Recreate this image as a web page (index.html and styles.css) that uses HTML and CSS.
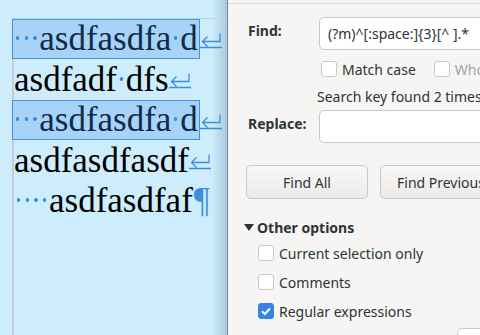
FILE: index.html
```html
<!DOCTYPE html>
<html lang="en">
<head>
  <meta charset="UTF-8" />
  <title>Find &amp; Replace</title>
  <link rel="stylesheet" href="styles.css">
</head>
<body>
  <div class="editor">
    <div class="page">
      <div class="line"><span class="sel"><span class="sp"></span><span class="sp"></span><span class="sp"></span>asdfasdfa<span class="sp"></span>d</span><svg class="ret" width="22" height="17" viewBox="0 0 22 17"><path d="M20 1.5v8H3M7.5 4.5l-5 5 5 5M0 15.5h22" fill="none" stroke="#3a8ee0" stroke-width="1.3"/></svg></div>
      <div class="line">asdfadf<span class="sp"></span>dfs<svg class="ret" width="22" height="17" viewBox="0 0 22 17"><path d="M20 1.5v8H3M7.5 4.5l-5 5 5 5M0 15.5h22" fill="none" stroke="#3a8ee0" stroke-width="1.3"/></svg></div>
      <div class="line"><span class="sel"><span class="sp"></span><span class="sp"></span><span class="sp"></span>asdfasdfa<span class="sp"></span>d</span><svg class="ret" width="22" height="17" viewBox="0 0 22 17"><path d="M20 1.5v8H3M7.5 4.5l-5 5 5 5M0 15.5h22" fill="none" stroke="#3a8ee0" stroke-width="1.3"/></svg></div>
      <div class="line">asdfasdfasdf<svg class="ret" width="22" height="17" viewBox="0 0 22 17"><path d="M20 1.5v8H3M7.5 4.5l-5 5 5 5M0 15.5h22" fill="none" stroke="#3a8ee0" stroke-width="1.3"/></svg></div>
      <div class="line"><span class="sp"></span><span class="sp"></span><span class="sp"></span><span class="sp"></span>asdfasdfaf<span class="pilcrow">¶</span></div>
    </div>
  </div>

  <div class="dialog">
    <div class="row">
      <label class="label">Find:</label>
      <div class="entry">(?m)^[:space:]{3}[^ ].*</div>
    </div>
    <div class="checks">
      <span class="check"><span class="box"></span>Match case</span>
      <span class="check off"><span class="box"></span>Whole words only</span>
    </div>
    <div class="status">Search key found 2 times</div>
    <div class="row">
      <label class="label">Replace:</label>
      <div class="entry"></div>
    </div>
    <div class="buttons">
      <button class="btn first">Find All</button>
      <button class="btn">Find Previous</button>
    </div>
    <div class="expander"><span class="arrow"></span>Other options</div>
    <div class="options">
      <span class="check"><span class="box"></span>Current selection only</span>
      <span class="check"><span class="box"></span>Comments</span>
      <span class="check"><span class="box on"><svg width="12" height="12" viewBox="0 0 12 12"><path d="M2 6.2l2.8 2.8L10 3.3" fill="none" stroke="#fff" stroke-width="2"/></svg></span>Regular expressions</span>
    </div>
    <div class="corner"></div>
  </div>
</body>
</html>
```

FILE: styles.css
```css
html, body {
  margin: 0;
  padding: 0;
  height: 100%;
  overflow: hidden;
}
body {
  display: flex;
  width: 480px;
  height: 335px;
  font-family: 'Noto Sans', sans-serif;
  background: #f6f5f4;
}
.editor {
  width: 228px;
  flex-shrink: 0;
  background: linear-gradient(to right, #cdedfd 0, #cdedfd 212px, #a9cadb 227px);
  border-right: 1px solid #6e8a99;
  padding: 19px 0 0 13px;
  box-sizing: border-box;
}
.page {
  height: 100%;
  border-top: 1px solid #bfd3dc;
  border-left: 2px solid #c4cdd2;
  margin-top: -1px;
  margin-left: -1px;
  font-family: 'Liberation Serif', serif;
  font-size: 35px;
  color: #000;
}
.line {
  height: 40.6px;
  line-height: 40px;
  white-space: nowrap;
}
.sel {
  display: inline-block;
  vertical-align: top;
  background: #a7d3f6;
  border: 1px solid #4690dc;
  color: #102b4a;
  margin-left: -2px;
  height: 38px;
  line-height: 38px;
  padding-right: 1px;
}
.sp {
  display: inline-block;
  width: 0.25em;
  height: 24px;
  vertical-align: baseline;
  background: radial-gradient(circle at 50% 50%, #3a8ee0 1.6px, transparent 2.1px);
}
.pilcrow {
  color: #3a8ee0;
  margin-left: 1px;
}
.ret {
  vertical-align: 1.5px;
}
.dialog {
  flex: 1;
  background: #f6f5f4;
  border-top: 1px solid #dcd8d4;
  margin-top: 3px;
  position: relative;
  overflow: hidden;
  color: #2e3436;
  font-size: 14px;
  padding: 13px 0 0 18px;
}
.row {
  display: flex;
  align-items: center;
  height: 33px;
}
.label {
  width: 71px;
  font-weight: bold;
  padding-left: 2px;
  margin-top: -7px;
}
.entry {
  flex: 1;
  height: 31px;
  margin-right: -20px;
  background: #fff;
  border: 1px solid #cdc7c2;
  border-radius: 5px;
  line-height: 31px;
  padding-left: 8px;
  white-space: nowrap;
}
.checks {
  display: flex;
  gap: 18px;
  margin: 11px 0 0 75px;
  white-space: nowrap;
}
.check {
  display: flex;
  align-items: center;
  gap: 5px;
  height: 16px;
  white-space: nowrap;
}
.check.off {
  color: #a0a5a6;
}
.box {
  width: 14px;
  height: 14px;
  border: 1px solid #cdc7c2;
  border-radius: 3px;
  background: #fff;
  display: flex;
  align-items: center;
  justify-content: center;
}
.box.on {
  background: #3584e4;
  border-color: #3584e4;
}
.status {
  margin: 9px 0 2px 71px;
  height: 22px;
  line-height: 22px;
  white-space: nowrap;
}
.buttons {
  display: flex;
  gap: 12px;
  margin-top: 22px;
  margin-right: -20px;
}
.btn {
  height: 34px;
  background: linear-gradient(#f8f7f6, #edebe9);
  border: 1px solid #cdc7c2;
  border-radius: 5px;
  font-family: 'Noto Sans', sans-serif;
  font-size: 14px;
  color: #2e3436;
  padding: 0;
  white-space: nowrap;
}
.btn.first {
  width: 122px;
}
.btn:not(.first) {
  flex: 1;
  text-align: left;
  padding-left: 16px;
}
.expander {
  display: flex;
  align-items: center;
  margin-top: 17px;
  font-weight: bold;
  height: 22px;
  margin-left: -2px;
}
.arrow {
  width: 0;
  height: 0;
  border-left: 5.5px solid transparent;
  border-right: 5.5px solid transparent;
  border-top: 7px solid #2e3436;
  margin: 1px 3px 0 0;
}
.options {
  display: flex;
  flex-direction: column;
  gap: 13px;
  margin: 7px 0 0 12px;
}
.corner {
  position: absolute;
  left: 229px;
  top: 324px;
  width: 40px;
  height: 30px;
  border: 1px solid #cdc7c2;
  border-radius: 5px;
  background: #fff;
}
```
